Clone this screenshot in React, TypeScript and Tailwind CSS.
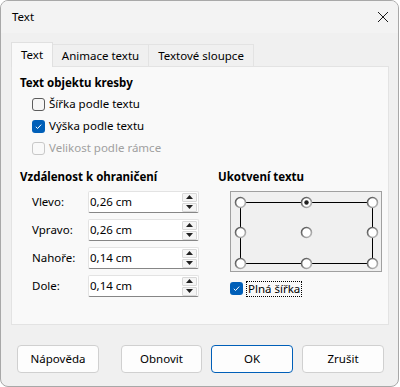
import React from "react";

const font = { fontFamily: '"Noto Sans", "Segoe UI", sans-serif' };

function CheckBox({ checked, disabled }: { checked?: boolean; disabled?: boolean }) {
  if (checked) {
    return (
      <span className="flex h-[13px] w-[13px] items-center justify-center rounded-[3px] bg-[#005fb8]">
        <svg width="9" height="9" viewBox="0 0 9 9">
          <path d="M1.8 4.8 L3.6 6.5 L7.2 2.6" fill="none" stroke="#ffffff" strokeWidth="1" />
        </svg>
      </span>
    );
  }
  return (
    <span
      className={
        disabled
          ? "h-[13px] w-[13px] rounded-[3px] border border-[#c8c8c8] bg-[#f9f9f9]"
          : "h-[13px] w-[13px] rounded-[3px] border border-[#5c5c5c] bg-[#f6f6f6]"
      }
    />
  );
}

function CheckRow({ label, checked, disabled }: { label: string; checked?: boolean; disabled?: boolean }) {
  return (
    <div className="flex h-[22px] items-center gap-[4px] pl-[12px]">
      <CheckBox checked={checked} disabled={disabled} />
      <span className={disabled ? "text-[#a0a0a0]" : "text-black"}>{label}</span>
    </div>
  );
}

function SpinField({ label, value }: { label: string; value: string }) {
  return (
    <div className="flex h-[22px] items-center pl-[12px]">
      <span className="w-[56px]">{label}</span>
      <div className="flex h-[22px] w-[111px] items-center rounded-[2px] border border-[#e3e3e3] border-b-[#868686] bg-white pl-[1px] pr-[1px]">
        <span className="flex-1">{value}</span>
        <div className="flex flex-col gap-[1px]">
          <span className="flex h-[9px] w-[15px] items-center justify-center rounded-[1px] border border-[#d8d8d8] bg-[#f5f5f5]">
            <svg width="7" height="4" viewBox="0 0 7 4">
              <path d="M3.5 0 L7 4 L0 4 Z" fill="#202020" />
            </svg>
          </span>
          <span className="flex h-[9px] w-[15px] items-center justify-center rounded-[1px] border border-[#d8d8d8] bg-[#f5f5f5]">
            <svg width="7" height="4" viewBox="0 0 7 4">
              <path d="M0 0 L7 0 L3.5 4 Z" fill="#202020" />
            </svg>
          </span>
        </div>
      </div>
    </div>
  );
}

function AnchorGrid() {
  const xs = [10, 76, 142];
  const ys = [11, 41, 72];
  return (
    <svg width="152" height="81" viewBox="0 0 152 81">
      <defs>
        <linearGradient id="rg" x1="0" y1="0" x2="1" y2="1">
          <stop offset="0" stopColor="#4a4a4a" />
          <stop offset="1" stopColor="#c4c4c4" />
        </linearGradient>
      </defs>
      <rect x="0.5" y="0.5" width="151" height="80" fill="#f0f0f0" stroke="#a0a0a0" />
      <rect x="10.5" y="11.5" width="132" height="61" fill="none" stroke="#000000" />
      {ys.map((y) =>
        xs.map((x) => (
          <g key={`${x}-${y}`}>
            <circle cx={x + 0.5} cy={y + 0.5} r="5" fill="#ffffff" stroke="url(#rg)" strokeWidth="1.6" />
            {x === 76 && y === 11 && <circle cx={x + 0.5} cy={y + 0.5} r="2.2" fill="#202020" />}
          </g>
        ))
      )}
    </svg>
  );
}

function Button({ label, primary, className }: { label: string; primary?: boolean; className?: string }) {
  return (
    <button
      className={`flex h-[28px] items-center justify-center rounded-[4px] border bg-[#fdfdfd] ${
        primary ? "border-[#005fb8]" : "border-[#d0d0d0]"
      } ${className ?? ""}`}
    >
      {label}
    </button>
  );
}

export default function App() {
  return (
    <div className="h-[387px] w-[400px] bg-white text-[11.5px] leading-[16px] text-black" style={font}>
      <div className="flex h-[387px] w-[399px] flex-col overflow-hidden rounded-[8px] border border-[#a8a8a8] bg-[#f0f0f0]">
        {/* Title bar */}
        <div className="flex h-[32px] items-center bg-[#f3f3f3] pl-[11px] pr-[9px]">
          <span>Text</span>
          <svg className="ml-auto" width="12" height="12" viewBox="0 0 12 12">
            <path d="M1 1 L11 11 M11 1 L1 11" stroke="#1a1a1a" strokeWidth="1" />
          </svg>
        </div>

        <div className="px-[10px] pt-[9px]">
          {/* Tabs */}
          <div className="flex h-[24px] items-end">
            <div className="relative z-10 -mb-px flex h-[25px] w-[42px] items-center justify-center border border-b-0 border-[#e0e0e0] bg-[#f9f9f9]">
              Text
            </div>
            <div className="-ml-px flex h-[22px] w-[97px] items-center justify-center border border-b-0 border-[#e3e3e3] bg-[#f0f0f0]">
              Animace textu
            </div>
            <div className="-ml-px flex h-[22px] w-[106px] items-center justify-center border border-b-0 border-[#e3e3e3] bg-[#f0f0f0]">
              Textové sloupce
            </div>
          </div>

          {/* Pane */}
          <div className="h-[259px] w-[378px] border border-[#e3e3e3] bg-[#f9f9f9] pl-[8px] pt-[8px]">
            <div className="h-[16px] font-bold">Text objektu kresby</div>
            <div className="mt-[2px]">
              <CheckRow label="Šířka podle textu" />
              <CheckRow label="Výška podle textu" checked />
              <CheckRow label="Velikost podle rámce" disabled />
            </div>

            <div className="mt-[10px] flex">
              <div className="w-[198px]">
                <div className="h-[16px] font-bold">Vzdálenost k ohraničení</div>
                <div className="mt-[6px] flex flex-col gap-[6px]">
                  <SpinField label="Vlevo:" value="0,26 cm" />
                  <SpinField label="Vpravo:" value="0,26 cm" />
                  <SpinField label="Nahoře:" value="0,14 cm" />
                  <SpinField label="Dole:" value="0,14 cm" />
                </div>
              </div>
              <div>
                <div className="h-[16px] font-bold">Ukotvení textu</div>
                <div className="mt-[6px] pl-[12px]">
                  <AnchorGrid />
                  <div className="mt-[9px] flex h-[15px] items-center gap-[3px]">
                    <CheckBox checked />
                    <span className="border border-dotted border-black px-[1px] leading-[14px]">Plná šířka</span>
                  </div>
                </div>
              </div>
            </div>
          </div>
        </div>

        {/* Buttons */}
        <div className="mt-[20px] flex pl-[16px]">
          <Button label="Nápověda" className="w-[82px]" />
          <Button label="Obnovit" className="ml-[22px] w-[81px]" />
          <Button label="OK" primary className="ml-[9px] w-[82px]" />
          <Button label="Zrušit" className="ml-[9px] w-[82px]" />
        </div>
      </div>
    </div>
  );
}
